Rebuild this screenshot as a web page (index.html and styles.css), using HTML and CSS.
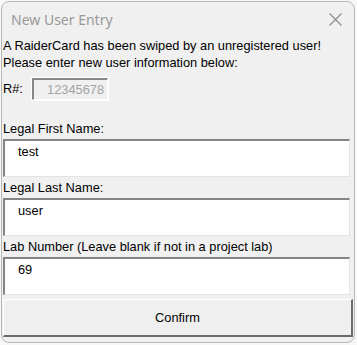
FILE: index.html
```html
<!DOCTYPE html>
<html>
<head>
<meta charset="utf-8">
<link rel="stylesheet" href="styles.css">
</head>
<body>
<div class="window">
  <div class="titlebar">
    <span class="title">New User Entry</span>
    <svg class="close" width="13" height="13" viewBox="0 0 13 13"><path d="M0.5 0.5 L12.5 12.5 M12.5 0.5 L0.5 12.5" stroke="#8a8a8a" stroke-width="1.1" fill="none"/></svg>
  </div>
  <div class="content">
    <p class="msg">A RaiderCard has been swiped by an unregistered user!<br>Please enter new user information below:</p>
    <div class="rrow">
      <span class="rlabel">R#:</span>
      <div class="rbox">12345678</div>
    </div>
    <div class="label l1">Legal First Name:</div>
    <div class="field">test</div>
    <div class="label">Legal Last Name:</div>
    <div class="field">user</div>
    <div class="label">Lab Number (Leave blank if not in a project lab)</div>
    <div class="field">69</div>
    <div class="button">Confirm</div>
  </div>
</div>
</body>
</html>
```
FILE: styles.css
```css
html, body {
  margin: 0;
  padding: 0;
  background: #f7f7f7;
}
body {
  width: 357px;
  height: 345px;
  overflow: hidden;
}
.window {
  margin: 1px 0 0 1px;
  width: 352px;
  height: 340px;
  border: 1px solid #b8b8b8;
  border-radius: 8px;
  background: #f0f0f0;
  position: relative;
  font-family: "Liberation Sans", Arial, sans-serif;
  font-size: 12.8px;
  color: #000;
}
.titlebar {
  height: 35px;
  display: flex;
  align-items: center;
  justify-content: space-between;
  padding: 0 12px 0 9px;
}
.title {
  font-family: "Noto Sans", sans-serif;
  font-size: 14px;
  color: #999;
}
.close {
  display: block;
}
.content {
  padding: 0 3px 0 1px;
}
.msg {
  margin: 0;
  line-height: 17px;
}
.rrow {
  display: flex;
  align-items: flex-start;
  margin-top: 7px;
  height: 23px;
}
.rlabel {
  width: 29px;
  padding-top: 3px;
}
.rbox {
  width: 70px;
  height: 19px;
  line-height: 19px;
  box-sizing: content-box;
  border-top: 2px solid #888;
  border-left: 2px solid #888;
  border-right: 1px solid #fff;
  border-bottom: 1px solid #fff;
  outline: 1px solid #fff;
  text-align: right;
  padding-right: 3px;
  color: #a3a3a3;
  background: #f0f0f0;
}
.label {
  height: 21px;
  line-height: 21px;
}
.label.l1 {
  margin-top: 17px;
}
.field {
  box-sizing: border-box;
  background: #fff;
  border-top: 2px solid #848484;
  border-left: 2px solid #848484;
  border-right: 1px solid #e3e3e3;
  border-bottom: 1px solid #e3e3e3;
  height: 38px;
  padding: 3px 0 0 13px;
  line-height: 16px;
  width: 347px;
}
.button {
  margin-top: 4px;
  width: 350px;
  height: 38px;
  box-sizing: border-box;
  border-top: 1px solid #fff;
  border-left: 1px solid #fff;
  border-right: 2px solid #6a6a6a;
  border-bottom: 2px solid #6a6a6a;
  background: #efefef;
  display: flex;
  align-items: center;
  justify-content: center;
}
```
